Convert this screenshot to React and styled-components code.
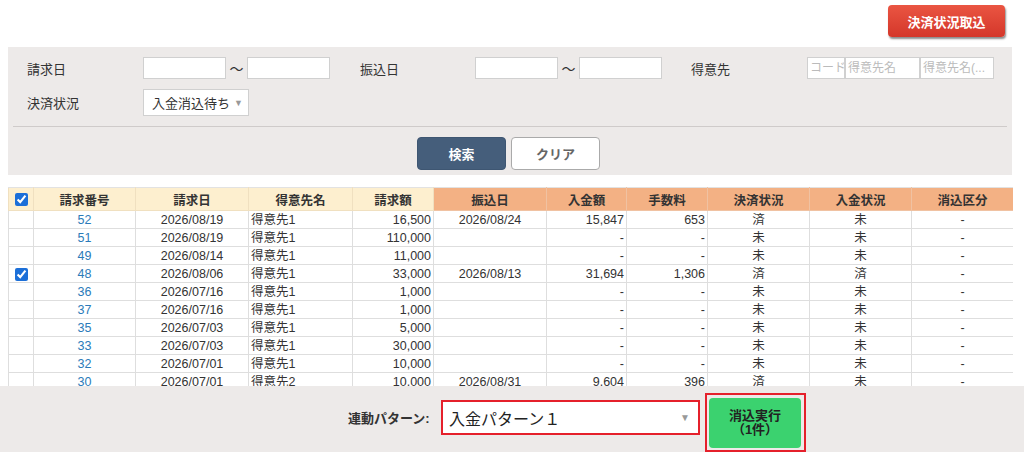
import React from "react";
import styled, { createGlobalStyle } from "styled-components";

const GlobalStyle = createGlobalStyle`
  html, body, #root {
    margin: 0;
    padding: 0;
    height: 100%;
  }
  body {
    font-family: "Liberation Sans", "Noto Sans CJK JP", sans-serif;
    color: #333;
    background: #fff;
  }
`;

const Page = styled.div`
  height: 452px;
  display: flex;
  flex-direction: column;
  overflow: hidden;
`;

const TopBar = styled.div`
  height: 47px;
  display: flex;
  justify-content: flex-end;
  align-items: flex-start;
  padding: 5px 19px 0 0;
  box-sizing: border-box;
`;

const ImportButton = styled.button`
  width: 117px;
  height: 32px;
  border: none;
  border-radius: 4px;
  background: linear-gradient(#ea5542, #d4372a);
  color: #fff;
  font-family: inherit;
  font-weight: bold;
  font-size: 13px;
  box-shadow: 1px 2px 2px rgba(0, 0, 0, 0.45);
`;

const FilterPanel = styled.div`
  margin: 0 12px 0 8px;
  background: #edeae9;
  padding: 10px 0 5px;
`;

const FilterRow = styled.div`
  display: flex;
  align-items: center;
  padding-left: 19px;
  margin-bottom: ${(p) => p.$gap || 0}px;
  font-size: 13px;
`;

const Label = styled.div`
  width: ${(p) => p.$w || 116}px;
  flex-shrink: 0;
`;

const TextBox = styled.div`
  width: ${(p) => p.$w}px;
  height: 22px;
  box-sizing: border-box;
  border: 1px solid #d0d0d0;
  background: #fff;
  font-size: 12px;
  color: #bbb;
  line-height: 20px;
  padding-left: 2px;
  overflow: hidden;
  white-space: nowrap;
  flex-shrink: 0;
`;

const Tilde = styled.div`
  width: 21px;
  text-align: center;
  font-size: 14px;
  color: #333;
`;

const Spacer = styled.div`
  width: ${(p) => p.$w}px;
  flex-shrink: 0;
`;

const StatusSelect = styled.div`
  width: 106px;
  height: 27px;
  box-sizing: border-box;
  border: 1px solid #d0d0d0;
  background: #fff;
  display: flex;
  align-items: center;
  padding-left: 8px;
  gap: 4px;
  font-size: 13px;
`;

const Caret = styled.span`
  color: #999;
  font-size: ${(p) => p.$size || 9}px;
`;

const Divider = styled.div`
  height: 1px;
  background: #cfcbca;
  margin: 10px 5px 10px;
`;

const ButtonRow = styled.div`
  display: flex;
  justify-content: center;
  gap: 5px;
  padding-right: 3px;
`;

const SearchButton = styled.button`
  width: 89px;
  height: 33px;
  box-sizing: border-box;
  border-radius: 4px;
  font-family: inherit;
  font-weight: bold;
  font-size: 13px;
  border: ${(p) => (p.$primary ? "1px solid #3e5672" : "1.5px solid #aaa")};
  background: ${(p) => (p.$primary ? "#455e7b" : "#fff")};
  color: ${(p) => (p.$primary ? "#fff" : "#666")};
`;

const TableWrap = styled.div`
  flex: 1;
  margin: 12px 11px 0 8px;
  overflow: hidden;
`;

const Table = styled.table`
  width: 1005px;
  border-collapse: collapse;
  table-layout: fixed;
  font-size: 12.5px;
`;

const Th = styled.th`
  height: 22px;
  padding: 0;
  font-weight: bold;
  font-size: 12.5px;
  color: #333;
  background: ${(p) => (p.$orange ? "#f3b184" : "#fdefcf")};
  border: 1px solid ${(p) => (p.$orange ? "#f0c2a2" : "#f0e0c0")};
  border-top-color: #e2e2e2;
`;

const Td = styled.td`
  height: 18px;
  padding: 0 2px;
  box-sizing: border-box;
  border: 1px solid #dedede;
  text-align: ${(p) => p.$align || "center"};
  color: ${(p) => (p.$link ? "#2b7bb9" : "#333")};
  white-space: nowrap;
  line-height: 16px;
`;

const Check = styled.input`
  margin: 0;
  width: 13px;
  height: 13px;
  accent-color: #1c6fd8;
  vertical-align: middle;
`;

const Footer = styled.div`
  height: 66px;
  flex-shrink: 0;
  background: #edeae9;
  display: flex;
  align-items: flex-start;
  padding: 7px 0 0 348px;
  box-sizing: border-box;
`;

const FooterLabel = styled.div`
  margin-top: 15px;
  font-weight: bold;
  font-size: 13px;
  color: #333;
  width: 93px;
`;

const PatternSelect = styled.div`
  margin-top: 7px;
  width: 259px;
  height: 35px;
  box-sizing: border-box;
  border: 2px solid #e5202b;
  background: #fff;
  display: flex;
  align-items: center;
  justify-content: space-between;
  padding: 0 8px 0 6px;
  font-size: 16px;
  color: #222;
`;

const ExecFrame = styled.div`
  margin-left: 5px;
  width: 101px;
  height: 59px;
  box-sizing: border-box;
  border: 2px solid #e5202b;
  padding: 3px 3px 2px 2px;
`;

const ExecButton = styled.button`
  width: 100%;
  height: 100%;
  border: none;
  border-radius: 4px;
  background: #3bd26f;
  font-family: inherit;
  font-weight: bold;
  font-size: 13px;
  line-height: 14px;
  color: #222;
  padding: 0;
`;

const columns = [
  { w: 25 },
  { w: 102, t: "請求番号" },
  { w: 113, t: "請求日" },
  { w: 104, t: "得意先名" },
  { w: 81, t: "請求額" },
  { w: 113, t: "振込日", o: true },
  { w: 80, t: "入金額", o: true },
  { w: 81, t: "手数料", o: true },
  { w: 102, t: "決済状況", o: true },
  { w: 102, t: "入金状況", o: true },
  { w: 102, t: "消込区分", o: true },
];

const rows = [
  ["52", "2026/08/19", "得意先1", "16,500", "2026/08/24", "15,847", "653", "済", "未"],
  ["51", "2026/08/19", "得意先1", "110,000", "", "-", "-", "未", "未"],
  ["49", "2026/08/14", "得意先1", "11,000", "", "-", "-", "未", "未"],
  ["48", "2026/08/06", "得意先1", "33,000", "2026/08/13", "31,694", "1,306", "済", "済", true],
  ["36", "2026/07/16", "得意先1", "1,000", "", "-", "-", "未", "未"],
  ["37", "2026/07/16", "得意先1", "1,000", "", "-", "-", "未", "未"],
  ["35", "2026/07/03", "得意先1", "5,000", "", "-", "-", "未", "未"],
  ["33", "2026/07/03", "得意先1", "30,000", "", "-", "-", "未", "未"],
  ["32", "2026/07/01", "得意先1", "10,000", "", "-", "-", "未", "未"],
  ["30", "2026/07/01", "得意先2", "10,000", "2026/08/31", "9,604", "396", "済", "未"],
];

function App() {
  return (
    <Page>
      <GlobalStyle />
      <TopBar>
        <ImportButton>決済状況取込</ImportButton>
      </TopBar>

      <FilterPanel>
        <FilterRow $gap={10}>
          <Label>請求日</Label>
          <TextBox $w={83} />
          <Tilde>〜</Tilde>
          <TextBox $w={83} />
          <Spacer $w={30} />
          <Label $w={115}>振込日</Label>
          <TextBox $w={83} />
          <Tilde>〜</Tilde>
          <TextBox $w={83} />
          <Spacer $w={29} />
          <Label>得意先</Label>
          <TextBox $w={38}>コード</TextBox>
          <TextBox $w={75}>得意先名</TextBox>
          <TextBox $w={74}>得意先名(...</TextBox>
        </FilterRow>
        <FilterRow>
          <Label>決済状況</Label>
          <StatusSelect>
            入金消込待ち <Caret>▼</Caret>
          </StatusSelect>
        </FilterRow>
        <Divider />
        <ButtonRow>
          <SearchButton $primary>検索</SearchButton>
          <SearchButton>クリア</SearchButton>
        </ButtonRow>
      </FilterPanel>

      <TableWrap>
        <Table>
          <colgroup>
            {columns.map((c, i) => (
              <col key={i} style={{ width: c.w }} />
            ))}
          </colgroup>
          <thead>
            <tr>
              {columns.map((c, i) => (
                <Th key={i} $orange={c.o}>
                  {i === 0 ? <Check type="checkbox" defaultChecked /> : c.t}
                </Th>
              ))}
            </tr>
          </thead>
          <tbody>
            {rows.map((r) => (
              <tr key={r[0]}>
                <Td>{r[9] && <Check type="checkbox" defaultChecked />}</Td>
                <Td $link>{r[0]}</Td>
                <Td>{r[1]}</Td>
                <Td $align="left">{r[2]}</Td>
                <Td $align="right">{r[3]}</Td>
                <Td>{r[4]}</Td>
                <Td $align="right">{r[5]}</Td>
                <Td $align="right">{r[6]}</Td>
                <Td>{r[7]}</Td>
                <Td>{r[8]}</Td>
                <Td>-</Td>
              </tr>
            ))}
          </tbody>
        </Table>
      </TableWrap>

      <Footer>
        <FooterLabel>連動パターン:</FooterLabel>
        <PatternSelect>
          入金パターン１ <Caret $size={10}>▼</Caret>
        </PatternSelect>
        <ExecFrame>
          <ExecButton>
            消込実行
            <br />
            （1件）
          </ExecButton>
        </ExecFrame>
      </Footer>
    </Page>
  );
}

export default App;
